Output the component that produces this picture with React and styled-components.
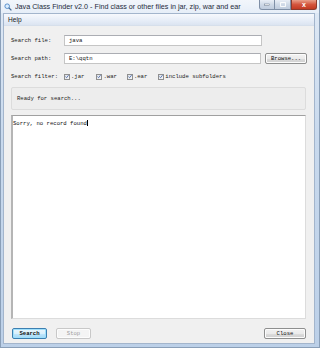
import styled, { createGlobalStyle } from "styled-components";

const GlobalStyle = createGlobalStyle`
  html, body {
    margin: 0;
    padding: 0;
    background: #ffffff;
  }
`;

const Window = styled.div`
  width: 320px;
  height: 348px;
  box-sizing: border-box;
  display: flex;
  flex-direction: column;
  background: linear-gradient(180deg, #dfe9f5 0%, #c8d9ed 40%, #bcd0e8 100%);
  border: 1px solid #8a9fb8;
  border-top: none;
  font-family: "Liberation Mono", "DejaVu Sans Mono", monospace;
  overflow: hidden;
`;

const TitleBar = styled.div`
  height: 13px;
  display: flex;
  align-items: flex-start;
  background: linear-gradient(180deg, #f2f6fb 0%, #e6eef8 100%);
`;

const AppIcon = styled.svg`
  margin: 3px 3px 0 3px;
  flex: none;
`;

const Title = styled.span`
  font-family: "Liberation Sans", Arial, sans-serif;
  font-size: 7.2px;
  line-height: 12px;
  color: #1e2a3a;
  white-space: nowrap;
  padding-top: 1px;
`;

const Controls = styled.div`
  margin-left: auto;
  margin-right: 2px;
  display: flex;
  height: 10px;
`;

const Ctl = styled.div`
  width: ${(p) => (p.$close ? "26px" : "16px")};
  height: 10px;
  box-sizing: border-box;
  border: 1px solid ${(p) => (p.$close ? "#8d3a2c" : "#7f8fa6")};
  border-top: none;
  border-left: ${(p) => (p.$first || p.$close ? "" : "none")};
  border-radius: ${(p) =>
    p.$first ? "0 0 0 3px" : p.$close ? "0 0 3px 0" : "0"};
  background: ${(p) =>
    p.$close
      ? "linear-gradient(180deg, #e8a08a 0%, #d4553d 50%, #c23a22 100%)"
      : "linear-gradient(180deg, #e9eef6 0%, #cfd9e7 50%, #bfcbdd 100%)"};
  display: flex;
  align-items: center;
  justify-content: center;
  color: #fff;
  font-family: "Liberation Sans", Arial, sans-serif;
  font-weight: bold;
  font-size: 7px;
`;

const Frame = styled.div`
  flex: 1;
  display: flex;
  flex-direction: column;
  padding: 0 4px 3px 2px;
  min-height: 0;
`;

const Client = styled.div`
  flex: 1;
  display: flex;
  flex-direction: column;
  background: #f0f0f0;
  border: 1px solid #a3b5cc;
  min-height: 0;
`;

const MenuBar = styled.div`
  height: 11px;
  display: flex;
  align-items: center;
  padding-left: 4px;
  background: linear-gradient(180deg, #f7f9fd 0%, #e6edf7 60%, #dbe4f1 100%);
  border-bottom: 1px solid #d6dfeb;
  font-family: "Liberation Sans", Arial, sans-serif;
  font-size: 6.6px;
  color: #1a1a1a;
`;

const Form = styled.div`
  display: flex;
  flex-direction: column;
  padding: 9px 7px 0 7px;
  gap: 7px;
`;

const Row = styled.div`
  display: flex;
  align-items: center;
  height: 11px;
`;

const Label = styled.span`
  width: 53px;
  flex: none;
  font-size: 5.6px;
  color: #222;
  white-space: nowrap;
`;

const Input = styled.div`
  width: 198px;
  height: 11px;
  box-sizing: border-box;
  background: #fff;
  border: 1px solid #c5c5c5;
  border-top-color: #abadb3;
  font-size: 5.6px;
  color: #111;
  display: flex;
  align-items: center;
  padding-left: 4px;
`;

const Button = styled.div`
  box-sizing: border-box;
  width: ${(p) => p.$w}px;
  height: 11px;
  border: 1px solid ${(p) => (p.$focus ? "#3c7fb1" : p.$disabled ? "#c8c8c8" : "#8e8f8f")};
  border-radius: 2px;
  background: ${(p) =>
    p.$focus
      ? "linear-gradient(180deg, #eaf6fd 0%, #d9f0fc 50%, #bee6fd 51%, #a7d9f5 100%)"
      : p.$disabled
      ? "#f4f4f4"
      : "linear-gradient(180deg, #f2f2f2 0%, #ebebeb 50%, #dddddd 51%, #cfcfcf 100%)"};
  box-shadow: ${(p) => (p.$focus ? "inset 0 0 0 1px #9fe0fc" : "inset 0 0 0 1px #fcfcfc")};
  display: flex;
  align-items: center;
  justify-content: center;
  font-size: 5.6px;
  font-weight: ${(p) => (p.$focus ? "bold" : "normal")};
  color: ${(p) => (p.$disabled ? "#a0a0a0" : "#111")};
  margin-left: ${(p) => p.$ml || 0}px;
`;

const Filters = styled.div`
  display: flex;
  align-items: center;
`;

const Check = styled.label`
  display: flex;
  align-items: center;
  gap: 1px;
  margin-right: ${(p) => p.$mr}px;
  font-size: 5.6px;
  color: #222;
  white-space: nowrap;
`;

const Box = styled.span`
  width: 6px;
  height: 6px;
  box-sizing: border-box;
  border: 1px solid #8f8f8f;
  background: linear-gradient(135deg, #dfe3e8 0%, #f7f7f7 100%);
  display: flex;
  align-items: center;
  justify-content: center;
`;

const StatusPanel = styled.div`
  margin: 5px 8px 0 7px;
  height: 23px;
  box-sizing: border-box;
  border: 1px solid #dcdcdc;
  border-radius: 2px;
  background: #ededed;
  display: flex;
  align-items: center;
  padding-left: 5px;
  font-size: 5.6px;
  color: #222;
`;

const Output = styled.div`
  flex: 1;
  margin: 5px 8px 0 7px;
  background: #fff;
  border: 1px solid #dcdcdc;
  border-top: 1px solid #a0a0a0;
  border-left: 2px solid #b5b5b5;
  font-size: 5.6px;
  color: #111;
  padding: 4px 0 0 0;
  min-height: 0;
`;

const Caret = styled.span`
  display: inline-block;
  width: 1px;
  height: 6px;
  background: #000;
  vertical-align: -1px;
`;

const Footer = styled.div`
  display: flex;
  align-items: center;
  padding: 9px 8px 4px 8px;
`;

const Spacer = styled.div`
  flex: 1;
`;

const CheckMark = () => (
  <svg width="5" height="5" viewBox="0 0 5 5">
    <path d="M0.6 2.6 L2 4 L4.5 0.8" fill="none" stroke="#2a4fa0" strokeWidth="0.9" />
  </svg>
);

const Filter = ({ text, mr }) => (
  <Check $mr={mr}>
    <Box>
      <CheckMark />
    </Box>
    {text}
  </Check>
);

export default function App() {
  return (
    <>
      <GlobalStyle />
      <Window>
        <TitleBar>
          <AppIcon width="8" height="8" viewBox="0 0 8 8">
            <circle cx="3.2" cy="3.2" r="2.3" fill="#dceefe" stroke="#4d87c7" strokeWidth="0.9" />
            <path d="M4.8 4.8 L7.4 7.4" stroke="#4a6f96" strokeWidth="1.3" />
          </AppIcon>
          <Title>Java Class Finder v2.0 - Find class or other files in jar, zip, war and ear</Title>
          <Controls>
            <Ctl $first>
              <svg width="6" height="3" viewBox="0 0 6 3">
                <rect x="0.5" y="1" width="5" height="1.4" fill="#fff" stroke="#4b5b70" strokeWidth="0.4" />
              </svg>
            </Ctl>
            <Ctl>
              <svg width="6" height="5" viewBox="0 0 6 5">
                <rect x="0.6" y="0.6" width="4.8" height="3.8" fill="none" stroke="#fff" strokeWidth="0.9" />
              </svg>
            </Ctl>
            <Ctl $close>x</Ctl>
          </Controls>
        </TitleBar>
        <Frame>
          <Client>
            <MenuBar>Help</MenuBar>
            <Form>
              <Row>
                <Label>Search file:</Label>
                <Input>java</Input>
              </Row>
              <Row>
                <Label>Search path:</Label>
                <Input>E:\qqtn</Input>
                <Button $w={42} $ml={4}>Browse...</Button>
              </Row>
              <Row>
                <Label>Search filter:</Label>
                <Filters>
                  <Filter text=".jar" mr={12} />
                  <Filter text=".war" mr={10} />
                  <Filter text=".ear" mr={11} />
                  <Filter text="include subfolders" mr={0} />
                </Filters>
              </Row>
            </Form>
            <StatusPanel>Ready for search...</StatusPanel>
            <Output>
              Sorry, no record found
              <Caret />
            </Output>
            <Footer>
              <Button $w={35} $focus>Search</Button>
              <Button $w={35} $ml={9} $disabled>Stop</Button>
              <Spacer />
              <Button $w={42}>Close</Button>
            </Footer>
          </Client>
        </Frame>
      </Window>
    </>
  );
}
